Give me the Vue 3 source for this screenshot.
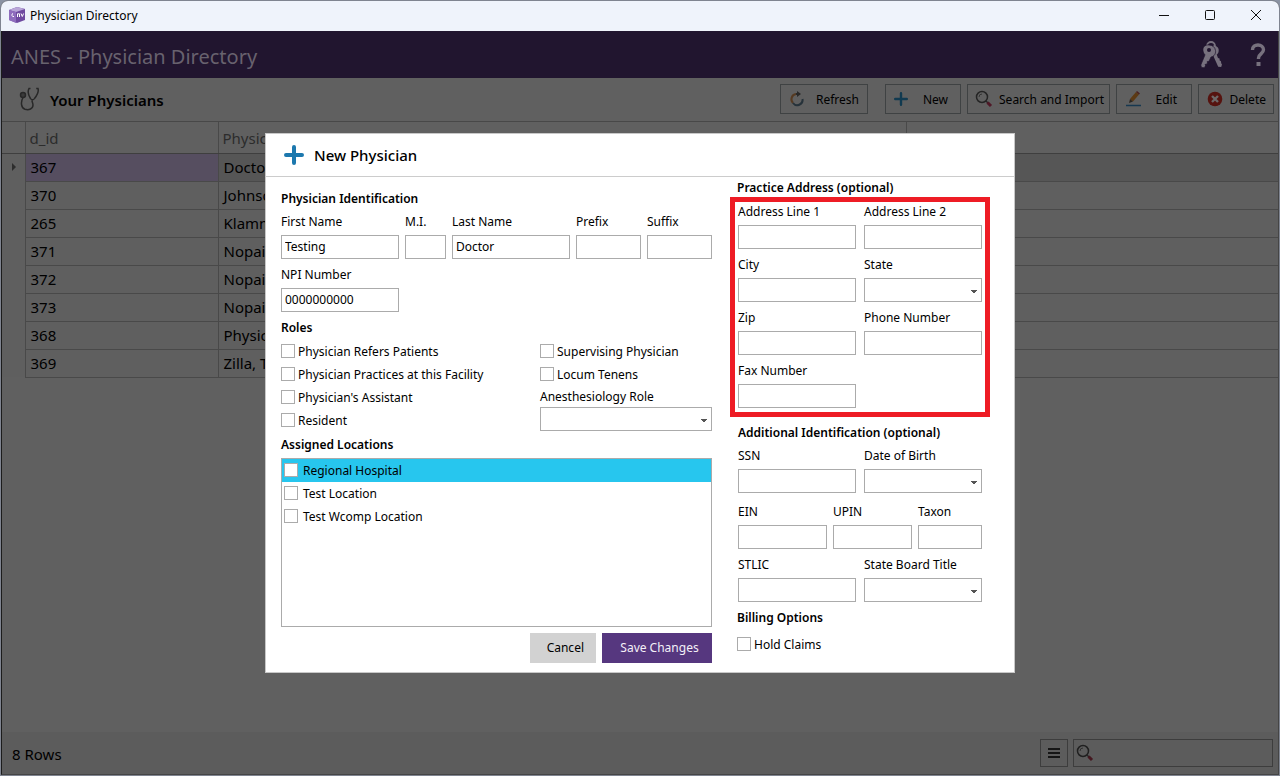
<script setup>
const rows = [
  ['367', 'Doctor, T'],
  ['370', 'Johnson'],
  ['265', 'Klamm'],
  ['371', 'Nopain'],
  ['372', 'Nopain'],
  ['373', 'Nopain'],
  ['368', 'Physici'],
  ['369', 'Zilla, T']
]
const leftRoles = ['Physician Refers Patients', 'Physician Practices at this Facility', "Physician's Assistant", 'Resident']
const rightRoles = ['Supervising Physician', 'Locum Tenens']
const locations = ['Regional Hospital', 'Test Location', 'Test Wcomp Location']
</script>

<template>
  <div class="window">
    <header class="titlebar">
      <svg class="app-icon" width="16" height="16" viewBox="0 0 16 16">
        <path d="M0 3 8 0 16 2V13L8 16 0 13Z" fill="#6f4aa0" />
        <path d="M0 3 8 0 16 2 7 5Z" fill="#b9a6d8" />
        <path d="M0 3 7 5V16L0 13Z" fill="#8f6dbd" />
        <path d="M4 6.500a1.500 1.500 0 1 0 1 3M8.500 10V6.800h2V10M12 6.500 13.300 9.500 14.600 6.500" fill="none" stroke="#fff" stroke-width="1" />
      </svg>
      <span class="titlebar-text">Physician Directory</span>
      <button class="win-btn" aria-label="Minimize"><svg width="12" height="12" viewBox="0 0 12 12"><path d="M1 6.500H11" /></svg></button>
      <button class="win-btn" aria-label="Maximize"><svg width="12" height="12" viewBox="0 0 12 12"><rect x="1.500" y="1.500" width="9" height="9" rx="1" /></svg></button>
      <button class="win-btn" aria-label="Close"><svg width="12" height="12" viewBox="0 0 12 12"><path d="M1 1 11 11M11 1 1 11" /></svg></button>
    </header>

    <div class="body">
      <div class="banner">
        <h1>ANES - Physician Directory</h1>
        <button class="banner-btn" aria-label="Security">
          <svg width="22" height="28" viewBox="0 0 22 28">
            <path d="M7 5a4 4 0 0 1 8 0" fill="none" stroke="#77717e" stroke-width="1.800" />
            <path d="M13 4.500c4.500 0 6.500 3 5.500 6.500-.400 1.400-1 2-1.800 2.600l1.300 3.400 1.500.600.200 2 1.300.600.200 2 .800 1.300-.800 2.500-3-.300-4.500-10Z" fill="#77717e" />
            <path d="M9 4C5 3.500 2.500 6 3 9.500c.200 2 1 3.500 2 4.300L.800 24l.700 2.500 3 .300 1-2.300-.500-1 2-.500.500-1.200-.500-1 2-.500L11 16c3-.500 5-3 4.500-6.500C15 6 12.500 4.200 9 4Z" fill="#77717e" stroke="#21152f" stroke-width=".7" />
            <circle cx="9" cy="9" r="2" fill="#21152f" />
          </svg>
        </button>
        <button class="banner-btn" aria-label="Help">
          <svg width="16" height="24" viewBox="0 0 16 24">
            <path d="M2.500 7C2.500 3.500 5 2 8 2s5.500 1.700 5.500 4.800c0 4-5 4.200-5 8.200v1" fill="none" stroke="#77717e" stroke-width="3.400" />
            <rect x="6.500" y="19" width="4" height="4" fill="#77717e" />
          </svg>
        </button>
      </div>

      <div class="toolbar">
        <svg width="22" height="24" viewBox="0 0 22 24" fill="none" stroke="#282828" stroke-width="1.500">
          <circle cx="4" cy="8" r="2.500" fill="#3b3b3b" />
          <path d="M4 10.500C1.500 15 2 21 6 22.300c4 1.200 8-.500 8-4.300 0-2-1-3-1-4.500M11.500 1.500H10c-1.500 3-.500 7 1.500 10 1 1.800 3 1.800 4 0C18 8.500 20 5 19 1.500h-1.800" />
        </svg>
        <h2>Your Physicians</h2>
        <button class="tool refresh">
          <svg width="16" height="16" viewBox="0 0 16 16" fill="none" stroke-width="2">
            <path d="M7 3a5.300 5.300 0 0 0-3 9" stroke="#553a22" /><path d="M4 12a5.300 5.300 0 0 0 9.500-4" stroke="#26323a" /><path d="M7 3h2" stroke="#292929" /><path d="M8 0v6l4-3Z" fill="#292929" stroke="none" />
          </svg><span>Refresh</span>
        </button>
        <button class="tool new">
          <svg width="14" height="14" viewBox="0 0 14 14"><path d="M7 1.200V12.800M1.200 7H12.800" stroke="#113a50" stroke-width="2.400" stroke-linecap="round" /></svg><span>New</span>
        </button>
        <button class="tool search">
          <svg width="18" height="18" viewBox="0 0 18 18"><circle cx="7" cy="7" r="5.500" fill="none" stroke="#252525" stroke-width="1.500" /><path d="M4 7a3 3 0 0 1 3-3" fill="none" stroke="#333" /><path d="m11 11 2 2" stroke="#252525" stroke-width="1.500" /><path d="m12.500 12.500 3.500 3.500" stroke="#501827" stroke-width="3" /></svg><span>Search and Import</span>
        </button>
        <button class="tool edit">
          <svg width="18" height="16" viewBox="0 0 18 16"><path d="m5 8 6-7 3 2.500-6 7Z" fill="#5c3a14" /><path d="m5 8-1 4 4-1.500Z" fill="#2b2620" /><path d="m11 1 1-1 3 2.500-1 1Z" fill="#4b2020" /><path d="M1 14.500H16" stroke="#173850" stroke-width="1.500" /></svg><span>Edit</span>
        </button>
        <button class="tool delete">
          <svg width="16" height="16" viewBox="0 0 16 16"><circle cx="8" cy="8" r="7.300" fill="#56130f" /><path d="m5 5 6 6M11 5l-6 6" stroke="#6c6868" stroke-width="2.400" /></svg><span>Delete</span>
        </button>
      </div>

      <div class="grid-area">
        <table>
          <thead>
            <tr><th class="mark"></th><th class="id">d_id</th><th class="name">Physici</th><th></th></tr>
          </thead>
          <tbody>
            <tr v-for="(r, i) in rows" :key="r[0]" :class="{ selected: i === 0 }">
              <td class="mark"><svg v-if="i === 0" width="4" height="8" viewBox="0 0 4 8"><path d="M0 0 4 4 0 8Z" fill="#2d2d2d" /></svg></td>
              <td>{{ r[0] }}</td><td>{{ r[1] }}</td><td></td>
            </tr>
          </tbody>
        </table>
      </div>

      <footer class="status">
        <span class="count">8 Rows</span>
        <button class="menu" aria-label="Menu"><svg width="12" height="12" viewBox="0 0 12 12"><path d="M0 2H12M0 6H12M0 10H12" stroke="#161616" stroke-width="2" /></svg></button>
        <label class="find">
          <svg width="18" height="18" viewBox="0 0 18 18"><circle cx="7" cy="7" r="5.500" fill="none" stroke="#202020" stroke-width="1.500" /><path d="M4 7a3 3 0 0 1 3-3" fill="none" stroke="#303030" /><path d="m11 11 2 2" stroke="#252525" stroke-width="1.500" /><path d="m12.500 12.500 3.500 3.500" stroke="#451820" stroke-width="3" /></svg>
          <input type="text" aria-label="Search" />
        </label>
      </footer>

      <div class="overlay">
        <form class="dialog" role="dialog" aria-labelledby="dlg" @submit.prevent>
          <div class="dialog-head">
            <svg width="20" height="20" viewBox="0 0 20 20"><path d="M10 2V18M2 10H18" stroke="#1c78ae" stroke-width="4" stroke-linecap="round" /></svg>
            <h2 id="dlg">New Physician</h2>
          </div>
          <div class="dialog-body">
            <section class="left">
              <h3>Physician Identification</h3>
              <div class="names">
                <label class="field"><span>First Name</span><input type="text" value="Testing" /></label>
                <label class="field"><span>M.I.</span><input type="text" /></label>
                <label class="field"><span>Last Name</span><input type="text" value="Doctor" /></label>
                <label class="field"><span>Prefix</span><input type="text" /></label>
                <label class="field"><span>Suffix</span><input type="text" /></label>
                <label class="field"><span>NPI Number</span><input type="text" value="0000000000" /></label>
              </div>
              <h3>Roles</h3>
              <div class="roles">
                <div>
                  <label v-for="r in leftRoles" :key="r" class="check"><input type="checkbox" /><span>{{ r }}</span></label>
                </div>
                <div>
                  <label v-for="r in rightRoles" :key="r" class="check"><input type="checkbox" /><span>{{ r }}</span></label>
                  <label class="field anes"><span>Anesthesiology Role</span><select></select></label>
                </div>
              </div>
              <h3>Assigned Locations</h3>
              <div class="locations">
                <label v-for="(l, i) in locations" :key="l" class="check" :class="{ active: i === 0 }"><input type="checkbox" /><span>{{ l }}</span></label>
              </div>
              <div class="actions">
                <button class="cancel" type="button">Cancel</button>
                <button class="save" type="submit">Save Changes</button>
              </div>
            </section>

            <section class="right">
              <h3>Practice Address (optional)</h3>
              <div class="address">
                <label class="field"><span>Address Line 1</span><input type="text" /></label>
                <label class="field"><span>Address Line 2</span><input type="text" /></label>
                <label class="field"><span>City</span><input type="text" /></label>
                <label class="field"><span>State</span><select></select></label>
                <label class="field"><span>Zip</span><input type="text" /></label>
                <label class="field"><span>Phone Number</span><input type="text" /></label>
                <label class="field"><span>Fax Number</span><input type="text" /></label>
              </div>
              <h3 class="additional">Additional Identification (optional)</h3>
              <div class="pair">
                <label class="field"><span>SSN</span><input type="text" /></label>
                <label class="field"><span>Date of Birth</span><select></select></label>
              </div>
              <div class="triple">
                <label class="field"><span>EIN</span><input type="text" /></label>
                <label class="field"><span>UPIN</span><input type="text" /></label>
                <label class="field"><span>Taxon</span><input type="text" /></label>
              </div>
              <div class="pair">
                <label class="field"><span>STLIC</span><input type="text" /></label>
                <label class="field"><span>State Board Title</span><select></select></label>
              </div>
              <h3 class="billing">Billing Options</h3>
              <label class="check hold"><input type="checkbox" /><span>Hold Claims</span></label>
            </section>
          </div>
        </form>
      </div>
    </div>
  </div>
</template>

<style>
body {
  margin: 0;
  background: #8b93a3;
}
</style>

<style scoped>
* {
  box-sizing: border-box;
}
.window {
  display: flex;
  flex-direction: column;
  min-height: 100vh;
  border: 1px solid #7f8490;
  border-radius: 8px 8px 0 0;
  overflow: hidden;
  background: #606060;
  font-family: "Noto Sans", "Open Sans", sans-serif;
  font-size: 12px;
  color: #000;
}
button, input, select {
  font: inherit;
  color: inherit;
}
h1, h2, h3 {
  margin: 0;
}
svg {
  display: block;
  flex: none;
}
.titlebar {
  display: flex;
  align-items: center;
  height: 30px;
  padding: 0 0 2px 8px;
  background: #eff3fb;
}
.titlebar-text {
  flex: 1;
  padding-left: 5px;
}
.win-btn {
  display: grid;
  place-items: center;
  width: 46px;
  height: 28px;
  padding: 0;
  border: 0;
  background: none;
}
.win-btn svg {
  fill: none;
  stroke: #111;
}
.body {
  position: relative;
  flex: 1;
  display: flex;
  flex-direction: column;
  border: solid #454545;
  border-width: 0 1px 1px;
  border-left-color: #1c1c1c;
}
.banner {
  display: flex;
  align-items: center;
  height: 47px;
  padding: 0 12px 0 9px;
  gap: 28px;
  background: #21152f;
}
.banner h1 {
  flex: 1;
  font-size: 20px;
  font-weight: 400;
  line-height: 28px;
  color: #68626e;
  padding-top: 4px;
}
.banner-btn {
  padding: 0;
  border: 0;
  background: none;
}
.toolbar {
  display: flex;
  align-items: center;
  height: 44px;
  padding: 0 4px 2px 17px;
  gap: 6px;
  border-bottom: 1px solid #484848;
}
.toolbar h2 {
  flex: 1;
  padding: 2px 0 0 3px;
  font-size: 15px;
  font-weight: 600;
}
.tool {
  display: flex;
  align-items: center;
  height: 30px;
  padding: 0 8px;
  border: 1px solid #3f4243;
  background: #606060;
  font-size: 12px;
  white-space: nowrap;
}
.tool span {
  flex: 1;
  padding-top: 1px;
  text-align: right;
}
.refresh { width: 88px; margin-right: 11px; }
.new { width: 76px; padding-right: 12px; }
.search { width: 143px; padding: 0 5px 0 7px; }
.edit { width: 76px; padding-right: 14px; }
.delete { width: 76px; padding-right: 7px; }
.grid-area {
  flex: 1;
}
table {
  width: 100%;
  border-collapse: collapse;
  table-layout: fixed;
  font-size: 15px;
}
th {
  height: 31px;
  padding: 1px 4px 0;
  border-right: 1px solid #494949;
  border-bottom: 1px solid #3f3f3f;
  text-align: left;
  font-weight: 400;
  color: #2c2c2c;
}
.mark { width: 23px; }
.id { width: 193px; }
.name { width: 688px; }
td {
  height: 28px;
  padding: 0 5px;
  border-right: 1px solid #494949;
  border-bottom: 1px solid #494949;
  background: #5f5f5f;
  white-space: nowrap;
  line-height: 20px;
}
td:nth-child(3), th:last-child, td:last-child {
  border-right: 0;
}
td.mark {
  padding-left: 10px;
  border-bottom: 0;
}
.selected td { background: #565656; }
.selected td:nth-child(2) { background: #564e60; }
.selected td.mark { background: #5f5f5f; }
.status {
  display: flex;
  align-items: center;
  height: 42px;
  padding: 0 5px 0 10px;
  background: #5c5c5c;
  font-size: 15px;
}
.count {
  flex: 1;
  padding-top: 2px;
}
.menu {
  display: grid;
  place-items: center;
  width: 28px;
  height: 28px;
  margin-right: 5px;
  padding: 0;
  border: 1px solid #3d3d3d;
  background: none;
}
.find {
  display: flex;
  align-items: center;
  width: 200px;
  height: 28px;
  padding-left: 2px;
  border: 1px solid #3d3d3d;
}
.find input {
  flex: 1;
  min-width: 0;
  border: 0;
  outline: 0;
  background: none;
}
.overlay {
  position: absolute;
  inset: 0;
  display: flex;
  align-items: center;
  justify-content: center;
}
.dialog {
  width: 750px;
  border: 1px solid #c8c8c8;
  background: #fff;
}
.dialog-head {
  display: flex;
  align-items: center;
  gap: 10px;
  height: 43px;
  padding-left: 18px;
  border-bottom: 1px solid #ccc;
}
.dialog-head h2 {
  font-size: 15px;
  font-weight: 500;
}
.dialog-body {
  display: flex;
  padding: 0 24px 9px 15px;
}
.left {
  width: 431px;
  margin-right: 18px;
  padding-top: 12px;
}
.right {
  flex: 1;
  padding-top: 1px;
}
h3 {
  font-size: 12px;
  font-weight: 600;
  line-height: 20px;
}
.right > h3 {
  margin-left: 7px;
}
.right .additional {
  margin: 6px 0 3px 8px;
}
.right .billing {
  margin-top: 6px;
}
.hold {
  margin: 5px 0 0 7px;
}
.field {
  display: flex;
  flex-direction: column;
  min-width: 0;
}
.field span {
  height: 23px;
  line-height: 20px;
  white-space: nowrap;
}
.anes {
  padding-top: 1px;
}
.anes span {
  height: 20px;
}
.field input, .field select {
  width: 100%;
  height: 24px;
  margin: 0;
  padding: 0 3px;
  border: 1px solid #ababab;
  border-radius: 0;
  outline: 0;
  background: #fff;
}
.field select {
  appearance: none;
  background:
    linear-gradient(#555, #555) right 4px top 11px / 6px 1px no-repeat,
    linear-gradient(#555, #555) right 5px top 12px / 4px 1px no-repeat,
    linear-gradient(#555, #555) right 6px top 13px / 2px 1px no-repeat,
    #fff;
}
.names {
  display: grid;
  grid-template-columns: 118px 41px 118px 65px 65px;
  gap: 6px;
  margin: 3px 0 6px;
}
.roles {
  display: grid;
  grid-template-columns: 259px 1fr;
  margin: 2px 0 3px;
}
.check {
  display: flex;
  align-items: center;
  height: 23px;
  gap: 3px;
}
.check span {
  padding-top: 1px;
}
.check input {
  appearance: none;
  flex: none;
  width: 14px;
  height: 14px;
  margin: 0;
  border: 1px solid #ababab;
  background: #fff;
}
.locations {
  height: 169px;
  margin-top: 3px;
  border: 1px solid #ababab;
}
.locations .check {
  gap: 5px;
  padding-left: 2px;
}
.locations .active { background: #27c6ee; }
.actions {
  display: flex;
  justify-content: flex-end;
  gap: 6px;
  margin-top: 6px;
}
.actions button {
  height: 30px;
  border: 0;
  padding: 0 12px 0 17px;
  background: #d2d2d2;
}
.actions .save {
  width: 110px;
  background: #56377f;
  color: #f4f0f8;
}
.address {
  display: grid;
  grid-template-columns: 118px 118px;
  gap: 6px 8px;
  margin-top: -1px;
  padding: 0 3px 4px;
  border: 5px solid #ee1c25;
}
.pair {
  display: grid;
  grid-template-columns: 118px 118px;
  gap: 8px;
  margin-left: 8px;
}
.triple {
  display: grid;
  grid-template-columns: 89px 79px 64px;
  gap: 6px;
  margin: 9px 0 6px 8px;
}
</style>
